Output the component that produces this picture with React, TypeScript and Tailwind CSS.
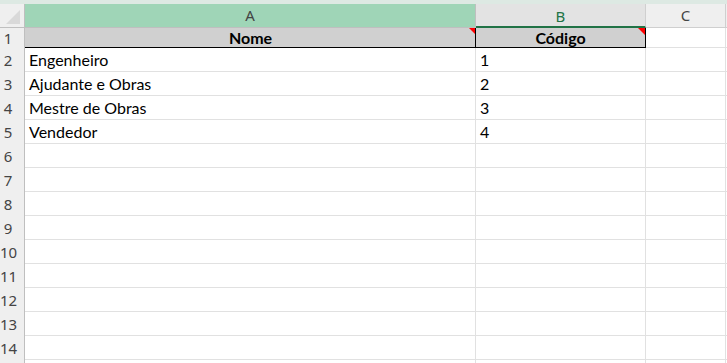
const rows = [
  { n: 2, a: "Engenheiro", b: "1" },
  { n: 3, a: "Ajudante e Obras", b: "2" },
  { n: 4, a: "Mestre de Obras", b: "3" },
  { n: 5, a: "Vendedor", b: "4" },
  { n: 6, a: "", b: "" },
  { n: 7, a: "", b: "" },
  { n: 8, a: "", b: "" },
  { n: 9, a: "", b: "" },
  { n: 10, a: "", b: "" },
  { n: 11, a: "", b: "" },
  { n: 12, a: "", b: "" },
  { n: 13, a: "", b: "" },
  { n: 14, a: "", b: "" },
  { n: 0, a: "", b: "" },
];

const cellFont = { fontFamily: "Lato, 'Open Sans', sans-serif" };

function RowHead({ n }: { n: number }) {
  return (
    <div className="flex h-full w-[25px] shrink-0 items-center border-r border-[#bfbfbf] bg-[#efefef]">
      <span className="w-[16px] text-center text-[15px] text-[#444]">{n > 0 ? n : ""}</span>
    </div>
  );
}

function CommentMark() {
  return (
    <span className="absolute right-0 top-0 h-0 w-0 border-l-[7px] border-t-[7px] border-l-transparent border-t-[#ff0000]" />
  );
}

export default function App() {
  return (
    <div className="h-[363px] w-[727px] overflow-hidden bg-white" style={{ fontFamily: "'Noto Sans', 'Open Sans', sans-serif" }}>
      <div className="h-[4px] bg-[#dde9e3]" />

      {/* column headers */}
      <div className="flex h-[24px]">
        <div className="relative w-[25px] shrink-0 border-b border-r border-[#bfbfbf] bg-[#efefef]">
          <span className="absolute bottom-[3px] right-[4px] h-0 w-0 border-b-[14px] border-l-[14px] border-b-[#d9d9d9] border-l-transparent" />
        </div>
        <div className="flex w-[451px] shrink-0 items-center justify-center border-b border-r border-[#bfbfbf] bg-[#9fd5b7] text-[15px] text-[#444]">
          A
        </div>
        <div className="flex w-[170px] shrink-0 items-center justify-center border-b-2 border-r border-b-[#217346] border-r-[#cfcfcf] bg-[#e3e3e3] pt-[2px] text-[15px] text-[#217346]">
          B
        </div>
        <div className="flex w-[80px] shrink-0 items-center justify-center border-b border-r border-[#cfcfcf] bg-[#efefef] text-[15px] text-[#444]">
          C
        </div>
        <div className="flex-1 border-b border-[#cfcfcf] bg-[#efefef]" />
      </div>

      {/* row 1 */}
      <div className="flex h-[20px]">
        <RowHead n={1} />
        <div
          className="relative flex w-[451px] shrink-0 items-end justify-center border-b border-black bg-[#d0d0d0] text-[16px] font-bold leading-[19px] text-black"
          style={cellFont}
        >
          Nome
          <CommentMark />
        </div>
        <div
          className="relative flex w-[171px] shrink-0 -ml-[1px] items-end justify-center border-x border-b border-black bg-[#d0d0d0] text-[16px] font-bold leading-[19px] text-black"
          style={cellFont}
        >
          Código
          <CommentMark />
        </div>
        <div className="w-[80px] shrink-0 border-b border-r border-[#e1e1e1]" />
        <div className="flex-1 border-b border-[#e1e1e1]" />
      </div>

      {rows.map((r, i) => (
        <div key={i} className="flex h-[24px]">
          <RowHead n={r.n} />
          <div
            className="flex w-[451px] shrink-0 items-end border-b border-r border-[#e1e1e1] pb-[1px] pl-[4px] text-[16px] leading-[20px] text-black"
            style={cellFont}
          >
            {r.a}
          </div>
          <div
            className="flex w-[170px] shrink-0 items-end border-b border-r border-[#e1e1e1] pb-[1px] pl-[4px] text-[16px] leading-[20px] text-black"
            style={cellFont}
          >
            {r.b}
          </div>
          <div className="w-[80px] shrink-0 border-b border-r border-[#e1e1e1]" />
          <div className="flex-1 border-b border-[#e1e1e1]" />
        </div>
      ))}
    </div>
  );
}
